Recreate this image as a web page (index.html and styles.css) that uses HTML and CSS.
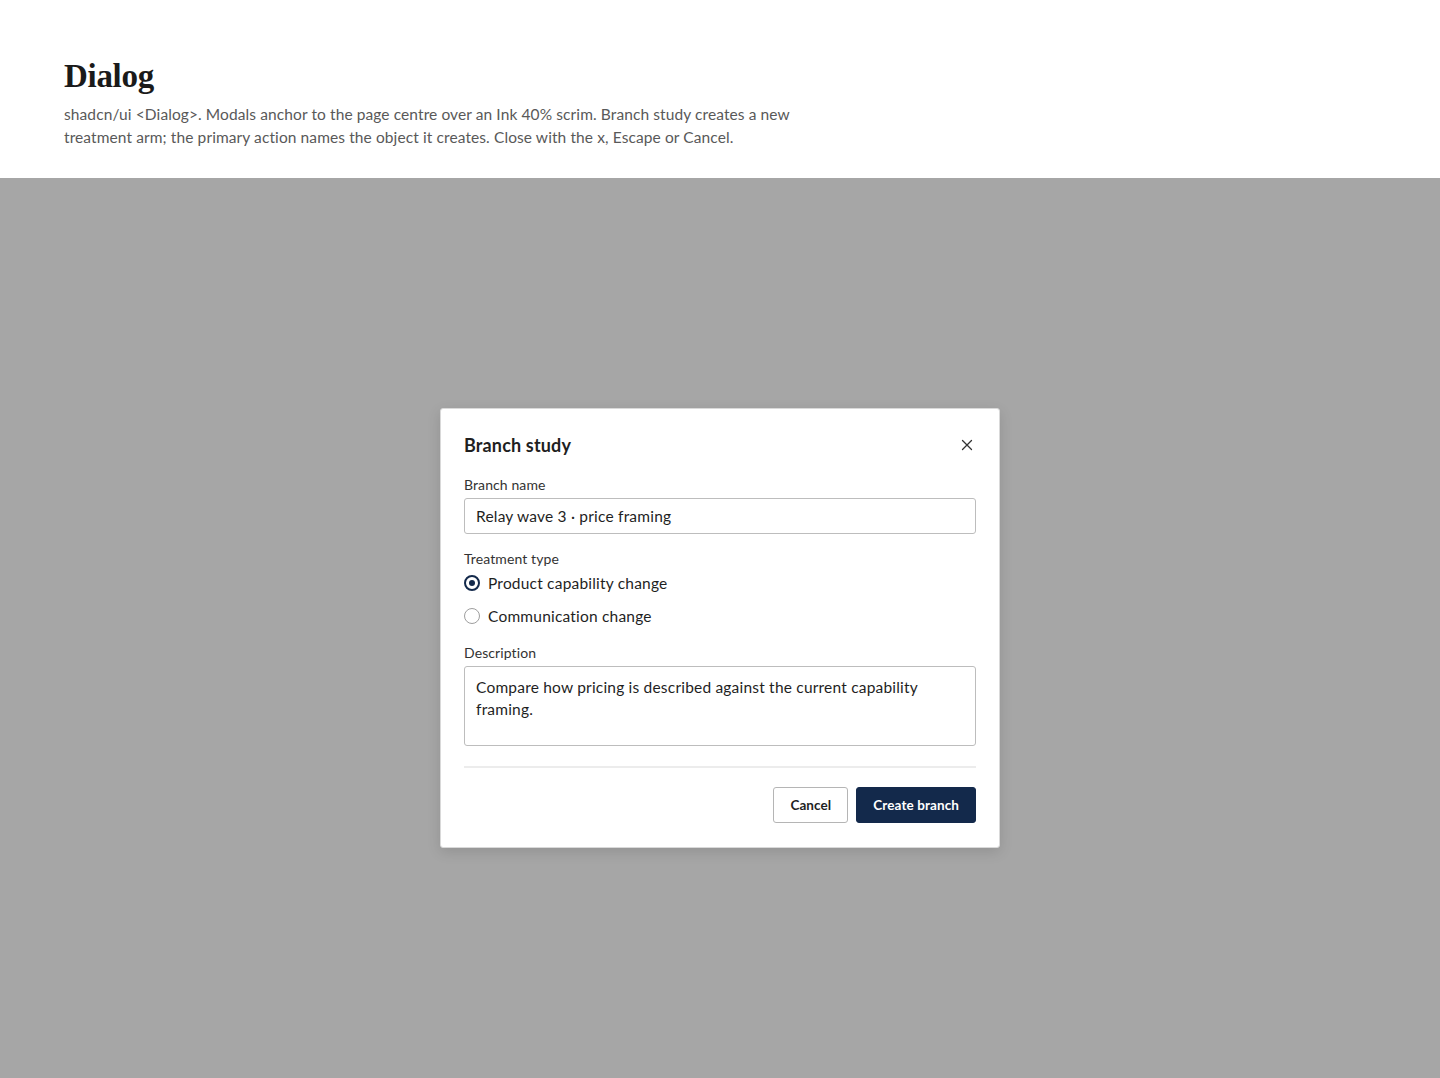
FILE: index.html
```html
<!DOCTYPE html>
<html>

<head>
  <meta charset="utf-8">
  <meta name="viewport" content="width=device-width">
  <title>Dialog</title>
  <link rel="stylesheet" href="styles.css">
</head>

<body>
  <header class="intro">
    <h1 class="intro-title">Dialog</h1>
    <p class="intro-text">shadcn/ui &lt;Dialog&gt;. Modals anchor to the page centre over an Ink 40% scrim. Branch study creates a new treatment arm; the primary action names the object it creates. Close with the x, Escape or Cancel.</p>
  </header>

  <div class="scrim">
    <div class="dialog" role="dialog" aria-labelledby="dialog-title">
      <div class="dialog-head">
        <h2 class="dialog-title" id="dialog-title">Branch study</h2>
        <button class="close" aria-label="Close">
          <svg width="16" height="16" viewBox="0 0 16 16" fill="none" stroke="#333" stroke-width="1.3" stroke-linecap="round">
            <path d="M3.5 3.5l9 9M12.5 3.5l-9 9"/>
          </svg>
        </button>
      </div>

      <label class="field-label" for="branch-name">Branch name</label>
      <input class="input" id="branch-name" type="text" value="Relay wave 3 · price framing">

      <div class="field-label group-label">Treatment type</div>
      <label class="radio-row">
        <span class="radio checked"></span>
        Product capability change
      </label>
      <label class="radio-row">
        <span class="radio"></span>
        Communication change
      </label>

      <label class="field-label desc-label" for="description">Description</label>
      <textarea class="textarea" id="description">Compare how pricing is described against the current capability framing.</textarea>

      <div class="dialog-foot">
        <button class="btn btn-outline">Cancel</button>
        <button class="btn btn-primary">Create branch</button>
      </div>
    </div>
  </div>
</body>

</html>
```

FILE: styles.css
```css
body {
  font-family: Lato, "Noto Sans", sans-serif;
  margin: 0;
  padding: 0;
  background-color: #fff;
  color: #1c1c1c;
  min-height: 100vh;
  display: flex;
  flex-direction: column;
}

.intro {
  padding: 56px 64px 29px;
}

.intro-title {
  font-family: "Liberation Serif", serif;
  font-size: 33px;
  font-weight: bold;
  letter-spacing: -0.3px;
  margin: 0 0 7px;
  line-height: 40px;
  color: #1a1a1a;
}

.intro-text {
  margin: 0;
  max-width: 760px;
  font-size: 15.5px;
  letter-spacing: 0.1px;
  line-height: 23px;
  color: #595959;
}

.scrim {
  flex: 1;
  background-color: #a6a6a6;
  display: flex;
  align-items: center;
  justify-content: center;
}

.dialog {
  width: 512px;
  padding: 24px 23px;
  background-color: #fff;
  border: 1px solid #d9d9d9;
  border-radius: 3px;
  box-shadow: 0 4px 14px rgba(0, 0, 0, 0.12);
  display: flex;
  flex-direction: column;
}

.dialog-head {
  display: flex;
  align-items: center;
  justify-content: space-between;
  margin-bottom: 20px;
}

.dialog-title {
  margin: 0;
  font-size: 18px;
  font-weight: bold;
  letter-spacing: 0.15px;
  line-height: 24px;
  color: #1f1f1f;
}

.close {
  width: 24px;
  height: 24px;
  padding: 0;
  margin-right: -3px;
  border: none;
  background: none;
  display: flex;
  align-items: center;
  justify-content: center;
  cursor: pointer;
}

.field-label {
  font-size: 14px;
  letter-spacing: 0.1px;
  line-height: 16px;
  color: #333;
  margin-bottom: 5px;
}

.group-label {
  margin-top: 17px;
  margin-bottom: -1px;
}

.desc-label {
  margin-top: 13px;
}

.input,
.textarea {
  box-sizing: border-box;
  width: 100%;
  border: 1px solid #bdbdbd;
  border-radius: 3px;
  padding: 0 11px;
  font-family: inherit;
  font-size: 15.5px;
  letter-spacing: 0.2px;
  color: #1f1f1f;
  background: #fff;
}

.input {
  height: 36px;
}

.textarea {
  height: 80px;
  padding-top: 9px;
  line-height: 22px;
  resize: none;
}

.radio-row {
  display: flex;
  align-items: center;
  gap: 8px;
  height: 33px;
  font-size: 15.5px;
  letter-spacing: 0.2px;
  color: #1f1f1f;
}

.radio {
  box-sizing: border-box;
  width: 16px;
  height: 16px;
  border: 1px solid #9e9e9e;
  border-radius: 50%;
  display: flex;
  align-items: center;
  justify-content: center;
}

.radio.checked {
  border: 2px solid #13294b;
}

.radio.checked::after {
  content: "";
  width: 6px;
  height: 6px;
  border-radius: 50%;
  background-color: #13294b;
}

.dialog-foot {
  margin-top: 20px;
  padding-top: 19px;
  border-top: 2px solid #ececec;
  display: flex;
  justify-content: flex-end;
  gap: 8px;
}

.btn {
  height: 36px;
  padding: 0 16px;
  border-radius: 3px;
  font-family: inherit;
  font-size: 13.5px;
  letter-spacing: 0.1px;
  font-weight: bold;
  cursor: pointer;
}

.btn-outline {
  background-color: #fff;
  border: 1px solid #b5b5b5;
  color: #1f1f1f;
}

.btn-primary {
  background-color: #13294b;
  border: 1px solid #13294b;
  color: #fff;
}
```
